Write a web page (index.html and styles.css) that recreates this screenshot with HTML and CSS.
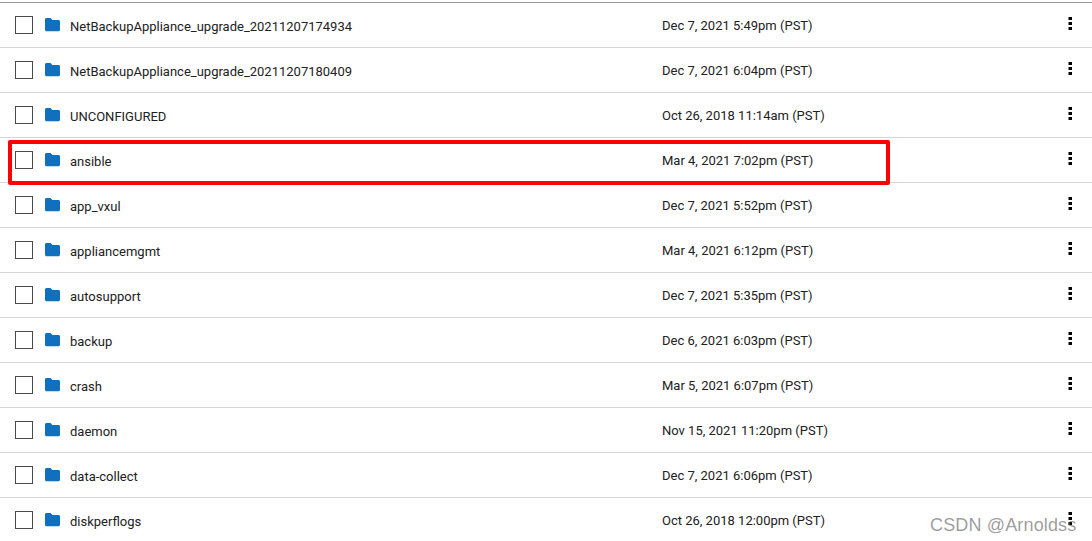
FILE: index.html
```html
<!DOCTYPE html>
<html lang="en">

<head>
    <meta charset="UTF-8">
    <meta name="viewport" content="width=device-width, initial-scale=1.0">
    <title>Files</title>
    <link rel="stylesheet" href="styles.css">
</head>

<body>
    <svg class="defs" width="0" height="0">
        <symbol id="folder" viewBox="0 0 15 14">
            <path d="M1.5 0H5.6L7.2 2H13.5C14.3 2 15 2.7 15 3.5V11.8C15 12.6 14.3 13.3 13.5 13.3H1.5C.7 13.3 0 12.6 0 11.8V1.5C0 .7 .7 0 1.5 0Z" />
        </symbol>
        <symbol id="kebab" viewBox="0 0 4 14">
            <rect x="0.5" y="0" width="3.5" height="3" />
            <rect x="0.5" y="5" width="3.5" height="3" />
            <rect x="0.5" y="10" width="3.5" height="3" />
        </symbol>
    </svg>

    <ul class="file-list">
        <li class="file-row">
            <span class="check"></span>
            <svg class="folder"><use href="#folder" /></svg>
            <span class="name">NetBackupAppliance_upgrade_20211207174934</span>
            <span class="date">Dec 7, 2021 5:49pm (PST)</span>
            <svg class="kebab"><use href="#kebab" /></svg>
        </li>
        <li class="file-row">
            <span class="check"></span>
            <svg class="folder"><use href="#folder" /></svg>
            <span class="name">NetBackupAppliance_upgrade_20211207180409</span>
            <span class="date">Dec 7, 2021 6:04pm (PST)</span>
            <svg class="kebab"><use href="#kebab" /></svg>
        </li>
        <li class="file-row">
            <span class="check"></span>
            <svg class="folder"><use href="#folder" /></svg>
            <span class="name">UNCONFIGURED</span>
            <span class="date">Oct 26, 2018 11:14am (PST)</span>
            <svg class="kebab"><use href="#kebab" /></svg>
        </li>
        <li class="file-row">
            <span class="check"></span>
            <svg class="folder"><use href="#folder" /></svg>
            <span class="name">ansible</span>
            <span class="date">Mar 4, 2021 7:02pm (PST)</span>
            <svg class="kebab"><use href="#kebab" /></svg>
        </li>
        <li class="file-row">
            <span class="check"></span>
            <svg class="folder"><use href="#folder" /></svg>
            <span class="name">app_vxul</span>
            <span class="date">Dec 7, 2021 5:52pm (PST)</span>
            <svg class="kebab"><use href="#kebab" /></svg>
        </li>
        <li class="file-row">
            <span class="check"></span>
            <svg class="folder"><use href="#folder" /></svg>
            <span class="name">appliancemgmt</span>
            <span class="date">Mar 4, 2021 6:12pm (PST)</span>
            <svg class="kebab"><use href="#kebab" /></svg>
        </li>
        <li class="file-row">
            <span class="check"></span>
            <svg class="folder"><use href="#folder" /></svg>
            <span class="name">autosupport</span>
            <span class="date">Dec 7, 2021 5:35pm (PST)</span>
            <svg class="kebab"><use href="#kebab" /></svg>
        </li>
        <li class="file-row">
            <span class="check"></span>
            <svg class="folder"><use href="#folder" /></svg>
            <span class="name">backup</span>
            <span class="date">Dec 6, 2021 6:03pm (PST)</span>
            <svg class="kebab"><use href="#kebab" /></svg>
        </li>
        <li class="file-row">
            <span class="check"></span>
            <svg class="folder"><use href="#folder" /></svg>
            <span class="name">crash</span>
            <span class="date">Mar 5, 2021 6:07pm (PST)</span>
            <svg class="kebab"><use href="#kebab" /></svg>
        </li>
        <li class="file-row">
            <span class="check"></span>
            <svg class="folder"><use href="#folder" /></svg>
            <span class="name">daemon</span>
            <span class="date">Nov 15, 2021 11:20pm (PST)</span>
            <svg class="kebab"><use href="#kebab" /></svg>
        </li>
        <li class="file-row">
            <span class="check"></span>
            <svg class="folder"><use href="#folder" /></svg>
            <span class="name">data-collect</span>
            <span class="date">Dec 7, 2021 6:06pm (PST)</span>
            <svg class="kebab"><use href="#kebab" /></svg>
        </li>
        <li class="file-row">
            <span class="check"></span>
            <svg class="folder"><use href="#folder" /></svg>
            <span class="name">diskperflogs</span>
            <span class="date">Oct 26, 2018 12:00pm (PST)</span>
            <svg class="kebab"><use href="#kebab" /></svg>
        </li>
    </ul>

    <div class="highlight"></div>
    <div class="watermark">CSDN @Arnoldss</div>
</body>

</html>
```

FILE: styles.css
```css
html,
body {
    height: 541px;
    overflow: hidden;
}

body {
    margin: 0;
    background-color: #ffffff;
    font-family: Roboto, "Liberation Sans", sans-serif;
    font-size: 13px;
    color: #212121;
}

.defs {
    position: absolute;
}

.file-list {
    list-style: none;
    margin: 2px 0 0;
    padding: 0;
    border-top: 1px solid #999999;
}

.file-row {
    display: flex;
    align-items: center;
    box-sizing: border-box;
    height: 45px;
    padding-left: 15px;
    border-bottom: 1px solid #d6d6d6;
}

.check {
    flex: none;
    box-sizing: border-box;
    width: 18px;
    height: 18px;
    border: 1px solid #4a4a4a;
}

.folder {
    flex: none;
    width: 15px;
    height: 14px;
    margin: 0 10px 0 12px;
    fill: #1170bd;
}

.name {
    width: 592px;
    flex: none;
    position: relative;
    top: 1px;
}

.date {
    width: 406px;
    flex: none;
}

.kebab {
    flex: none;
    width: 4px;
    height: 14px;
    fill: #000000;
    position: relative;
    top: -1px;
}

/* red box drawn over the ansible row */
.highlight {
    position: absolute;
    left: 8px;
    top: 140px;
    width: 874px;
    height: 37px;
    border: 4px solid #fe0000;
    border-radius: 2px;
}

.watermark {
    position: absolute;
    left: 930px;
    top: 515px;
    font-family: "Liberation Sans", sans-serif;
    font-size: 18px;
    line-height: 20px;
    letter-spacing: 0.15px;
    color: rgba(90, 90, 90, 0.6);
}
```
